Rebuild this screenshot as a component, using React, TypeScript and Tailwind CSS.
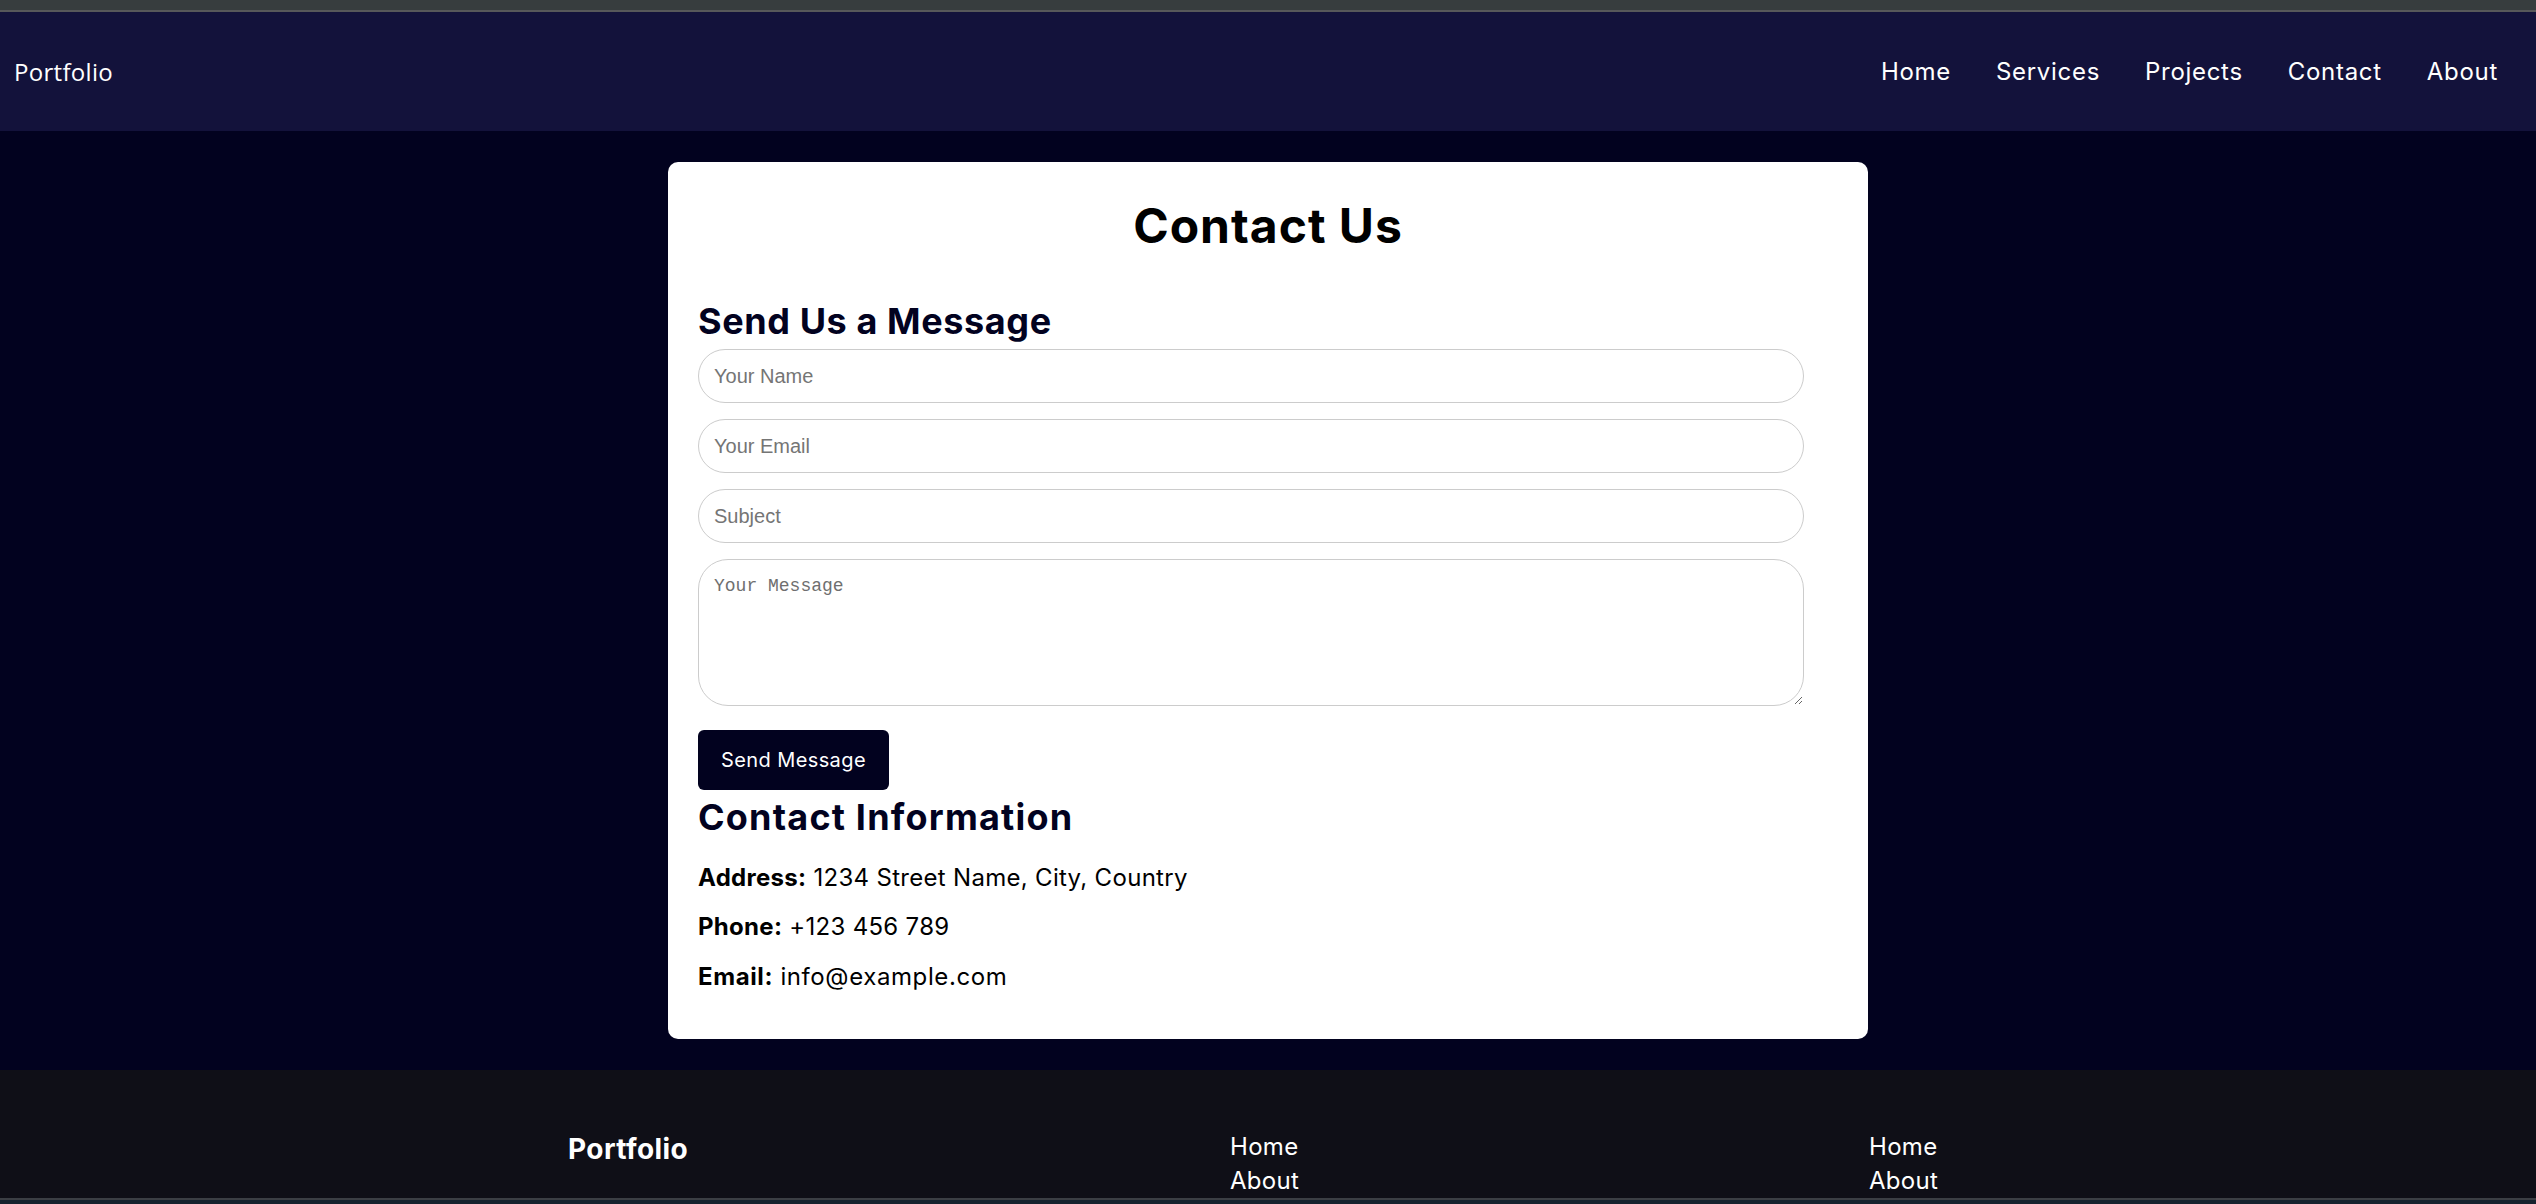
import React from "react";

export default function App() {
  const navLinks = ["Home", "Services", "Projects", "Contact", "About"];
  return (
    <div className="w-full h-[1204px] overflow-hidden flex flex-col bg-[#02021f] font-['Inter',sans-serif]">
      <div className="h-[10px] bg-[#373d3e] shrink-0" />
      <div className="h-[2px] bg-[#57585a] shrink-0" />
      <nav className="h-[119px] shrink-0 bg-[#13123b] flex items-center justify-between pl-[14px] pr-[38px]">
        <div className="text-white text-[24px] tracking-[0.3px] font-['Open_Sans',sans-serif]">Portfolio</div>
        <ul className="flex gap-[45px] text-white text-[24px] tracking-[0.7px]">
          {navLinks.map((l) => (
            <li key={l}>{l}</li>
          ))}
        </ul>
      </nav>

      <main className="flex justify-center pt-[31px] pb-[31px] shrink-0">
        <div className="w-[1200px] bg-white rounded-[10px] pt-[34px] px-[30px] pb-[44px]">
          <h1 className="text-center text-[48px] leading-[60px] font-bold tracking-[1px] text-black">Contact Us</h1>
          <h2 className="mt-[43px] mb-[6px] text-[36px] leading-[44px] font-bold tracking-[0.6px] text-[#02021f]">
            Send Us a Message
          </h2>
          <form className="flex flex-col" onSubmit={(e) => e.preventDefault()}>
            <input
              className="w-[1106px] h-[54px] px-[15px] border border-[#cccccc] rounded-[30px] text-[20px] font-['Liberation_Sans',sans-serif] placeholder:text-[#757575] outline-none"
              placeholder="Your Name"
            />
            <input
              className="mt-[16px] w-[1106px] h-[54px] px-[15px] border border-[#cccccc] rounded-[30px] text-[20px] font-['Liberation_Sans',sans-serif] placeholder:text-[#757575] outline-none"
              placeholder="Your Email"
            />
            <input
              className="mt-[16px] w-[1106px] h-[54px] px-[15px] border border-[#cccccc] rounded-[30px] text-[20px] font-['Liberation_Sans',sans-serif] placeholder:text-[#757575] outline-none"
              placeholder="Subject"
            />
            <textarea
              className="block mt-[16px] w-[1106px] h-[147px] px-[15px] py-[14px] border border-[#cccccc] rounded-[30px] text-[18px] leading-[24px] font-['Liberation_Mono',monospace] placeholder:text-[#6f6f6f] outline-none"
              placeholder="Your Message"
            />
            <button
              type="submit"
              className="mt-[24px] w-[191px] h-[60px] bg-[#02021f] text-white text-[20px] tracking-[0.4px] rounded-[6px] flex items-center justify-center"
            >
              Send Message
            </button>
          </form>
          <h2 className="mt-[5px] text-[36px] leading-[44px] font-bold tracking-[1.2px] text-[#02021f]">
            Contact Information
          </h2>
          <p className="mt-[21px] text-[24px] leading-[36px] tracking-[0.3px] text-black">
            <strong className="font-bold">Address:</strong> 1234 Street Name, City, Country
          </p>
          <p className="mt-[13px] text-[24px] leading-[36px] tracking-[0.3px] text-black">
            <strong className="font-bold">Phone:</strong> +123 456 789
          </p>
          <p className="mt-[14px] text-[24px] leading-[36px] tracking-[0.6px] text-black">
            <strong className="font-bold">Email:</strong> info@example.com
          </p>
        </div>
      </main>

      <footer className="flex-1 min-h-0 overflow-hidden bg-[#0f0f17] pt-[59px] pl-[568px] flex text-white">
        <div className="w-[662px] text-[28px] leading-[40px] font-bold tracking-[0.4px]">Portfolio</div>
        <ul className="w-[639px] mt-[1px] text-[24px] leading-[34px] tracking-[0.3px]">
          <li>Home</li>
          <li>About</li>
        </ul>
        <ul className="mt-[1px] text-[24px] leading-[34px] tracking-[0.3px]">
          <li>Home</li>
          <li>About</li>
        </ul>
      </footer>
      <div className="h-[2px] bg-[#3b3e44] shrink-0" />
      <div className="h-[4px] bg-[#16222e] shrink-0" />
    </div>
  );
}
